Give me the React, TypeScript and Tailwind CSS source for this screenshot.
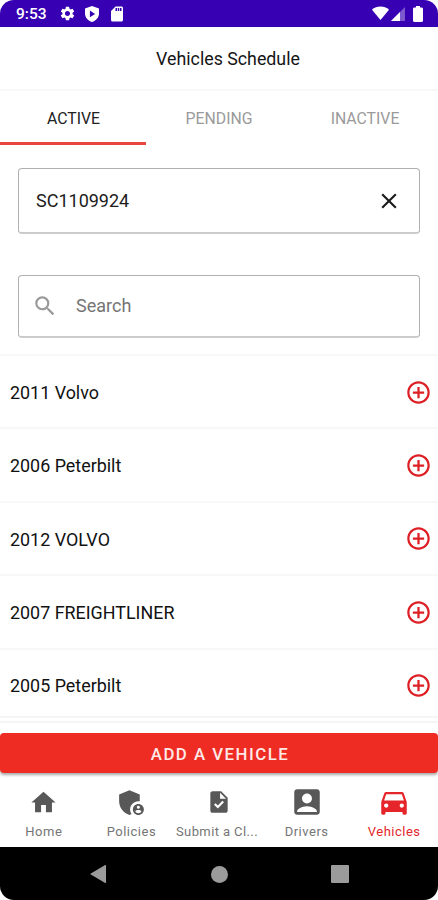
import { useState } from "react";
import {
  MdAccountBox,
  MdAddCircleOutline,
  MdAdminPanelSettings,
  MdClose,
  MdDirectionsCar,
  MdHome,
  MdSdCard,
  MdSearch,
  MdSettings,
  MdTask,
} from "react-icons/md";

const tabs = ["ACTIVE", "PENDING", "INACTIVE"];

const vehicles = [
  "2011 Volvo",
  "2006 Peterbilt",
  "2012 VOLVO",
  "2007 FREIGHTLINER",
  "2005 Peterbilt",
];

const menu = [
  { label: "Home", icon: <MdHome size={29} /> },
  { label: "Policies", icon: <MdAdminPanelSettings size={33} /> },
  { label: "Submit a Cl...", icon: <MdTask size={26} /> },
  { label: "Drivers", icon: <MdAccountBox size={34} /> },
  { label: "Vehicles", icon: <MdDirectionsCar size={34} /> },
];

function StatusBar() {
  return (
    <div className="flex h-[27px] shrink-0 items-center justify-between bg-[#3700b3] pl-4 pr-[15px] text-white">
      <div className="flex items-center">
        <span className="w-[43px] pt-[2px] text-[15.5px] font-medium leading-none">9:53</span>
        <MdSettings size={17} />
        <svg viewBox="0 0 14 16" className="ml-[9px] h-4 w-[14px]">
          <path
            fill="currentColor"
            fillRule="evenodd"
            d="M7 0l7 2.6v5c0 4-3 7.3-7 8.4-4-1.1-7-4.4-7-8.4v-5zM4.9 4.6v6.6l5.2-3.3z"
          />
        </svg>
        <MdSdCard size={18} className="ml-[9px]" />
      </div>
      <div className="flex items-center">
        <svg viewBox="0 0 18 15" className="h-[15px] w-[17px]">
          <path fill="currentColor" d="M0 3.4C2.5 1.2 5.6 0 9 0s6.500 1.200 9 3.400L9 14.500z" />
        </svg>
        <svg viewBox="0 0 14 14" className="ml-[2px] mt-px h-[14px] w-[14px]">
          <path fill="currentColor" opacity="0.35" d="M14 0v14H0z" />
          <path fill="currentColor" d="M9 5v9H0z" />
        </svg>
        <svg viewBox="0 0 10 16" className="ml-2 h-4 w-[10px]">
          <path
            fill="currentColor"
            d="M3 0h4v1.500h1.500c.8 0 1.500.6 1.500 1.400v11.600c0 .8-.7 1.500-1.500 1.500h-7C.7 16 0 15.300 0 14.500V2.900c0-.8.7-1.400 1.500-1.400H3z"
          />
        </svg>
      </div>
    </div>
  );
}

function App() {
  const [active, setActive] = useState("ACTIVE");

  return (
    <div className="bg-white font-['Roboto',sans-serif]">
      <div className="flex h-[900px] w-[438px] flex-col overflow-hidden rounded-[14px] bg-white">
        <StatusBar />
        <h1 className="flex h-16 shrink-0 items-center justify-center border-b-2 border-[#f8f8f8] pl-[18px] pt-[2px] text-[17.8px] text-[#151515]">
          Vehicles Schedule
        </h1>
        <div className="grid h-[54px] shrink-0 grid-cols-3">
          {tabs.map((tab) => (
            <button
              key={tab}
              onClick={() => setActive(tab)}
              className={
                tab === active
                  ? "border-b-[3px] border-[#e8473f] pl-px pt-1 text-[15.8px] text-[#222]"
                  : "border-b-[3px] border-transparent pt-1 text-[15.8px] text-[#9a9a9a]"
              }
            >
              {tab}
            </button>
          ))}
        </div>

        <div className="flex h-[209px] shrink-0 flex-col px-[18px] pt-[23px]">
          <div className="flex h-[66px] items-center justify-between rounded-[4px] border border-b-2 border-[#b0b0b0] border-b-[#cbcbcb] pl-[17px] pr-[17px] text-[18px] text-[#1c1c1c]">
            <span>SC1109924</span>
            <MdClose size={26} />
          </div>
          <div className="mt-[41px] flex h-[63px] items-center rounded-[4px] border border-b-2 border-[#b0b0b0] border-b-[#cbcbcb] pb-px pl-[13px] text-[18px] text-[#757575]">
            <MdSearch size={26} className="text-[#999]" />
            <span className="ml-[18px]">Search</span>
          </div>
        </div>

        <ul className="flex h-[369px] shrink-0 flex-col overflow-hidden border-b-2 border-[#f5f5f5]">
          {vehicles.map((vehicle) => (
            <li
              key={vehicle}
              className="flex h-[73.4px] shrink-0 items-center justify-between border-t-2 border-[#f8f8f8] pl-[10px] pr-[6px] pt-px text-[17.9px] text-[#111] last:h-[70px] last:border-b-2 last:border-b-[#f5f5f5] last:pt-[6px]"
            >
              <span className="pt-[2px]">{vehicle}</span>
              <MdAddCircleOutline size={27} className="text-[#dd2025]" />
            </li>
          ))}
        </ul>

        <button className="mt-[10px] h-10 shrink-0 rounded-[4px] bg-[#ee2c24] pl-[2px] pt-[3px] text-[16.8px] font-medium tracking-[1.5px] text-[#ffe9e7] shadow-[0_2px_3px_rgba(0,0,0,0.35)]">
          ADD A VEHICLE
        </button>

        <nav className="grid h-[74px] shrink-0 grid-cols-5">
          {menu.map((item) => (
            <a
              key={item.label}
              className={
                item.label === "Vehicles"
                  ? "flex flex-col items-center text-[13px] tracking-[0.5px] text-[#e5252a]"
                  : "flex flex-col items-center text-[13px] tracking-[0.5px] text-[#757575]"
              }
            >
              <span
                className={
                  item.label === "Vehicles"
                    ? "mt-3 flex h-[34px] items-center"
                    : "mt-3 flex h-[34px] items-center text-[#585858]"
                }
              >
                {item.icon}
              </span>
              <span
                className={
                  item.label === "Submit a Cl..."
                    ? "-ml-1 whitespace-nowrap pt-px leading-[23px] tracking-[0.4px]"
                    : "whitespace-nowrap pt-px leading-[23px]"
                }
              >
                {item.label}
              </span>
            </a>
          ))}
        </nav>

        <div className="flex h-[53px] shrink-0 items-center justify-between bg-black pl-[90px] pr-[89px] pt-px text-[#9b9b9b]">
          <svg viewBox="0 0 17 18" className="h-[18px] w-[17px]">
            <path fill="currentColor" d="M16 .5v17a.5.5 0 01-.8.4L.8 9.500a.6.6 0 010-1L15.200.1a.5.5 0 01.8.4z" />
          </svg>
          <div className="h-[17px] w-[17px] rounded-full bg-[#9b9b9b]" />
          <div className="h-[18px] w-[18px] rounded-[1px] bg-[#9b9b9b]" />
        </div>
      </div>
    </div>
  );
}

export default App;
